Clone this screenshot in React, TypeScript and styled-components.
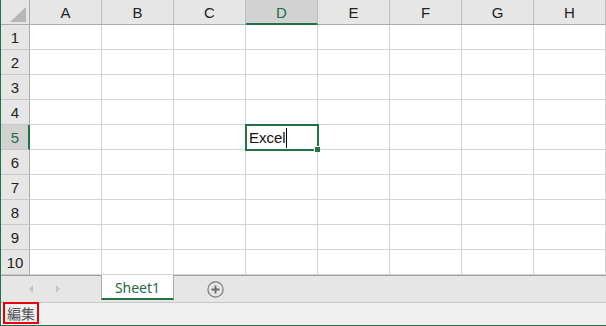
import React from "react";
import styled, { createGlobalStyle } from "styled-components";

const GREEN = "#217346";
const columns = ["A", "B", "C", "D", "E", "F", "G", "H"];
const rows = [1, 2, 3, 4, 5, 6, 7, 8, 9, 10];
const activeCol = "D";
const activeRow = 5;

export default function App() {
  return (
    <>
      <GlobalStyle />
      <Frame>
        <Sheet>
          <Corner>
            <CornerMark />
          </Corner>
          {columns.map((c) => (
            <ColHeader key={c} $selected={c === activeCol}>
              {c}
            </ColHeader>
          ))}
          {rows.map((r) => (
            <React.Fragment key={r}>
              <RowHeader $selected={r === activeRow}>{r}</RowHeader>
              {columns.map((c) => (
                <Cell key={c + r}>
                  {c === activeCol && r === activeRow && (
                    <>
                      <CellText>
                        Excel
                        <Caret />
                      </CellText>
                      <Selection>
                        <FillHandle />
                      </Selection>
                    </>
                  )}
                </Cell>
              ))}
            </React.Fragment>
          ))}
        </Sheet>
        <TabBar>
          <TabNav>
            <NavArrow $dir="left" />
            <NavArrow $dir="right" />
          </TabNav>
          <SheetTab>Sheet1</SheetTab>
          <AddSheet>
            <svg width="17" height="17" viewBox="0 0 17 17">
              <circle cx="8.5" cy="8.5" r="7.6" fill="none" stroke="#7a7a7a" strokeWidth="1.2" />
              <path d="M8.5 4.5v8M4.5 8.5h8" stroke="#6a6a6a" strokeWidth="1.8" />
            </svg>
          </AddSheet>
        </TabBar>
        <StatusBar>
          <ModeBox>編集</ModeBox>
        </StatusBar>
      </Frame>
    </>
  );
}

const GlobalStyle = createGlobalStyle`
  html, body {
    margin: 0;
    padding: 0;
    background: #ffffff;
  }
  body {
    font-family: "Liberation Sans", "Noto Sans CJK JP", sans-serif;
  }
`;

const Frame = styled.div`
  width: 606px;
  height: 326px;
  box-sizing: border-box;
  border-left: 1px solid ${GREEN};
  border-bottom: 1px solid ${GREEN};
  display: flex;
  flex-direction: column;
  overflow: hidden;
`;

const Sheet = styled.div`
  display: grid;
  grid-template-columns: 29px repeat(8, 72px);
  grid-auto-rows: 25px;
`;

const Corner = styled.div`
  box-sizing: border-box;
  background: #e6e6e6;
  border-right: 1px solid #ababab;
  border-bottom: 1px solid #ababab;
  display: flex;
  align-items: flex-end;
  justify-content: flex-end;
  padding: 0 3px 2px 0;
`;

const CornerMark = styled.div`
  width: 16px;
  height: 15px;
  flex: none;
  background: #b6b6b6;
  clip-path: polygon(100% 0, 100% 100%, 0 100%);
`;

const ColHeader = styled.div<{ $selected?: boolean }>`
  box-sizing: border-box;
  background: ${(p) => (p.$selected ? "#d2d2d2" : "#e6e6e6")};
  border-right: 1px solid #bdbdbd;
  border-bottom: ${(p) => (p.$selected ? `2px solid ${GREEN}` : "1px solid #ababab")};
  color: ${(p) => (p.$selected ? "#1e6b45" : "#222222")};
  font-size: 15px;
  display: flex;
  align-items: center;
  justify-content: center;
  padding-top: ${(p) => (p.$selected ? "1px" : "0")};
`;

const RowHeader = styled.div<{ $selected?: boolean }>`
  box-sizing: border-box;
  background: ${(p) => (p.$selected ? "#d2d2d2" : "#e6e6e6")};
  border-right: ${(p) => (p.$selected ? `2px solid ${GREEN}` : "1px solid #ababab")};
  border-bottom: 1px solid #c8c8c8;
  color: ${(p) => (p.$selected ? "#1e6b45" : "#222222")};
  font-size: 15px;
  display: flex;
  align-items: center;
  justify-content: center;
  padding-left: ${(p) => (p.$selected ? "1px" : "0")};
`;

const Cell = styled.div`
  position: relative;
  box-sizing: border-box;
  background: #ffffff;
  border-right: 1px solid #d4d4d4;
  border-bottom: 1px solid #d4d4d4;
`;

const CellText = styled.div`
  position: absolute;
  left: 3px;
  top: 3px;
  font-size: 15px;
  line-height: 18px;
  color: #111111;
  display: flex;
  align-items: center;
  z-index: 3;
`;

const Caret = styled.span`
  display: inline-block;
  width: 1px;
  height: 20px;
  background: #000000;
`;

const Selection = styled.div`
  position: absolute;
  left: -1px;
  top: -1px;
  right: -2px;
  bottom: -2px;
  border: 2px solid ${GREEN};
  z-index: 2;
`;

const FillHandle = styled.div`
  position: absolute;
  right: -3px;
  bottom: -3px;
  width: 5px;
  height: 5px;
  background: ${GREEN};
  border-left: 1px solid #ffffff;
  border-top: 1px solid #ffffff;
`;

const TabBar = styled.div`
  height: 28px;
  box-sizing: border-box;
  background: #e6e6e6;
  border-top: 1px solid #9e9e9e;
  border-bottom: 1px solid #c6c6c6;
  display: flex;
  align-items: flex-start;
`;

const TabNav = styled.div`
  width: 100px;
  height: 100%;
  display: flex;
  align-items: center;
  gap: 23px;
  padding-left: 28px;
  box-sizing: border-box;
`;

const NavArrow = styled.span<{ $dir: "left" | "right" }>`
  width: 0;
  height: 0;
  border-top: 4px solid transparent;
  border-bottom: 4px solid transparent;
  ${(p) =>
    p.$dir === "left"
      ? "border-right: 4px solid #c4c4c4;"
      : "border-left: 4px solid #c4c4c4;"}
`;

const SheetTab = styled.div`
  margin-top: -1px;
  width: 73px;
  height: 25px;
  box-sizing: border-box;
  background: #ffffff;
  border-left: 1px solid #ababab;
  border-right: 1px solid #ababab;
  border-bottom: 2px solid ${GREEN};
  color: #1e6b45;
  font-family: "Noto Sans", "Liberation Sans", sans-serif;
  font-size: 14px;
  display: flex;
  align-items: center;
  justify-content: center;
  padding-top: 2px;
`;

const AddSheet = styled.div`
  margin-left: 33px;
  height: 100%;
  display: flex;
  align-items: center;
`;

const StatusBar = styled.div`
  flex: 1;
  background: #f0f0f0;
  display: flex;
  align-items: flex-start;
  padding-left: 2px;
`;

const ModeBox = styled.div`
  margin-top: -1px;
  width: 36px;
  height: 22px;
  box-sizing: border-box;
  border: 2px solid #e8000b;
  color: #555555;
  font-family: "Noto Sans CJK JP", sans-serif;
  font-size: 14px;
  display: flex;
  align-items: center;
  justify-content: center;
`;
